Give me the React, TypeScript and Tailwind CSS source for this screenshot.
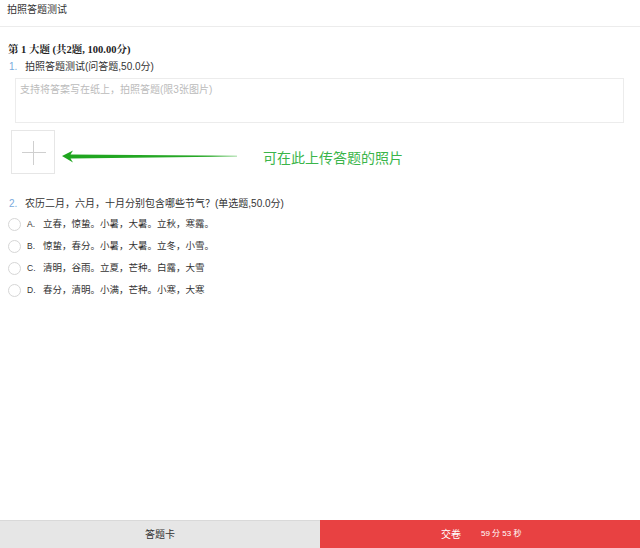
import React from "react";

const font = { fontFamily: '"Liberation Sans", "Noto Sans CJK SC", sans-serif' };

const options = [
  { k: "A.", t: "立春，惊蛰。小暑，大暑。立秋，寒露。" },
  { k: "B.", t: "惊蛰，春分。小暑，大暑。立冬，小雪。" },
  { k: "C.", t: "清明，谷雨。立夏，芒种。白露，大雪" },
  { k: "D.", t: "春分，清明。小满，芒种。小寒，大寒" },
];

export default function App() {
  return (
    <div className="w-[640px] h-[548px] bg-white flex flex-col text-[#333]" style={font}>
      <div className="h-[27px] border-b border-[#ececec] pl-[7px] pt-[3px] text-[10px] leading-[13px] text-[#333]">
        拍照答题测试
      </div>
      <div className="flex-1 flex flex-col">
        <div className="mt-[16px] pl-[8px] text-[10.5px] font-bold text-[#222] leading-[13px]" style={{ fontFamily: '"Liberation Serif", "Noto Serif CJK SC", "Noto Sans CJK SC", serif' }}>
          第 1 大题 (共2题, 100.00分)
        </div>
        <div className="mt-[4px] flex items-center text-[10px] leading-[13px]">
          <span className="w-[25px] pl-[9px] text-[#7aaadc]">1.</span>
          <span className="text-[#333]">拍照答题测试(问答题,50.0分)</span>
        </div>
        <div className="ml-[15px] mr-[16px] mt-[5px] h-[45px] border border-[#ececec] pl-[4px] pt-[3px] text-[10px] text-[#bbb]">
          支持将答案写在纸上，拍照答题(限3张图片)
        </div>
        <div className="mt-[7px] flex items-center">
          <div className="ml-[11px] w-[44px] h-[44px] border border-[#e6e6e6] relative">
            <div className="absolute left-[10px] top-[21px] w-[24px] h-px bg-[#cfcfcf]" />
            <div className="absolute left-[21px] top-[10px] w-px h-[24px] bg-[#cfcfcf]" />
          </div>
          <svg width="180" height="14" viewBox="0 0 180 14" className="ml-[6px] mt-[10px]">
            <defs>
              <linearGradient id="g" x1="0" x2="1" y1="0" y2="0">
                <stop offset="0" stopColor="#1ea51e" />
                <stop offset="0.85" stopColor="#28a828" />
                <stop offset="1" stopColor="#7fcf7f" />
              </linearGradient>
            </defs>
            <path d="M1 6 L12 0.5 L9.5 4.5 L176 5.8 L176 6.6 L9.5 8.5 L12 12.5 Z" fill="url(#g)" />
          </svg>
          <span className="ml-[22px] mt-[10px] text-[14px] text-[#3ab54a]" style={{ fontFamily: '"Noto Sans CJK SC", sans-serif' }}>
            可在此上传答题的照片
          </span>
        </div>
        <div className="mt-[23px] flex items-center text-[10px] leading-[13px]">
          <span className="w-[25px] pl-[9px] text-[#7aaadc]">2.</span>
          <span className="text-[#333]">农历二月，六月，十月分别包含哪些节气？(单选题,50.0分)</span>
        </div>
        <div className="mt-[8px] flex flex-col gap-[9px]">
          {options.map((o) => (
            <div key={o.k} className="flex items-center h-[13px] text-[9.5px] text-[#333]">
              <span className="ml-[8px] w-[13px] h-[13px] rounded-full border border-[#d6d6d6]" />
              <span className="ml-[6px] w-[16px] text-[8.5px]">{o.k}</span>
              <span>{o.t}</span>
            </div>
          ))}
        </div>
      </div>
      <div className="h-[28px] flex text-[10px]">
        <div className="w-1/2 bg-[#e6e6e6] border-t border-[#d9d9d9] flex items-center justify-center text-[#333]">
          答题卡
        </div>
        <div className="w-1/2 bg-[#e84142] flex items-center text-white">
          <span className="ml-[121px]">交卷</span>
          <span className="ml-[20px] text-[8px]">59 分 53 秒</span>
        </div>
      </div>
    </div>
  );
}
